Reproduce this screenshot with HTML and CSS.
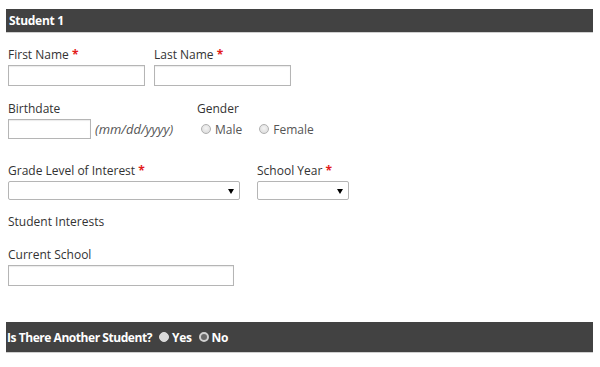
FILE: index.html
```html
<!DOCTYPE html>
<html>
<head>
  <meta name="viewport" content="width=device-width">
  <title>Student Information</title>
  <link rel="stylesheet" href="styles.css">
</head>
<body>
  <div class="main">
    <header class="bar bar_top">Student 1</header>
    <div class="row row_names">
      <div class="field field_first">
        <label>First Name <span class="req">*</span></label>
        <input type="text" class="text_box name_box">
      </div>
      <div class="field">
        <label>Last Name <span class="req">*</span></label>
        <input type="text" class="text_box name_box">
      </div>
    </div>
    <div class="row row_birth">
      <div class="field field_birth">
        <label>Birthdate</label>
        <div class="inline">
          <input type="text" class="text_box birth_box">
          <span class="hint">(mm/dd/yyyy)</span>
        </div>
      </div>
      <div class="field">
        <label>Gender</label>
        <div class="radios">
          <label class="choice"><input type="radio" name="gender"> Male</label>
          <label class="choice"><input type="radio" name="gender"> Female</label>
        </div>
      </div>
    </div>
    <div class="row row_grade">
      <div class="field field_grade">
        <label>Grade Level of Interest <span class="req">*</span></label>
        <div class="select grade_select"><select></select></div>
      </div>
      <div class="field">
        <label>School Year <span class="req">*</span></label>
        <div class="select year_select"><select></select></div>
      </div>
    </div>
    <div class="row row_interests">
      <label>Student Interests</label>
    </div>
    <div class="row row_school">
      <div class="field">
        <label>Current School</label>
        <input type="text" class="text_box school_box">
      </div>
    </div>
    <div class="bar bar_bottom">
      <span class="question">Is There Another Student?</span>
      <label class="choice choice_dark"><input type="radio" name="another" class="radio_yes"> Yes</label>
      <label class="choice choice_dark"><input type="radio" name="another" class="radio_no"> No</label>
    </div>
  </div>
</body>
</html>
```

FILE: styles.css
```css
*, *:before, *:after {
  box-sizing: border-box;
}
body {
  font-family: "Open Sans", sans-serif;
  font-size: 12px;
  color: #333;
  margin: 0;
  padding: 0;
  background: #fff;
}
.main {
  padding: 9px 7px 0 6px;
}

.bar {
  background: #424242;
  color: #fff;
  font-weight: bold;
  border-bottom: 1px solid #cfcfcf;
  display: flex;
  align-items: center;
  letter-spacing: -0.3px;
}
.bar_top {
  height: 24px;
  padding-left: 3px;
}
.bar_bottom {
  height: 31px;
  padding-left: 1px;
  margin-top: 36px;
}
.question {
  letter-spacing: -0.45px;
}

.row {
  display: flex;
  padding-left: 2px;
}
.row_names { margin-top: 14px; }
.row_birth { margin-top: 15px; }
.row_grade { margin-top: 24px; }
.row_interests { margin-top: 14px; line-height: 16px; }
.row_school { margin-top: 17px; }

.field {
  display: flex;
  flex-direction: column;
}
.field > label {
  line-height: 16px;
  margin-bottom: 2px;
}
.field_first { width: 146px; }
.field_birth { width: 189px; }
.field_grade { width: 249px; }

.req {
  color: #e31b1b;
  font-weight: bold;
}

.text_box {
  border: 1px solid #b5b5b5;
  box-shadow: inset 0 1px 1px rgba(0, 0, 0, 0.08);
  background: #fff;
  margin: 0;
  padding: 0 4px;
  font: inherit;
}
.name_box { width: 137px; height: 21px; }
.birth_box { width: 83px; height: 20px; }
.school_box { width: 226px; height: 21px; }

.inline {
  display: flex;
  align-items: center;
}
.hint {
  font-style: italic;
  font-size: 13px;
  color: #555;
  margin-left: 4px;
}

.radios {
  display: flex;
  align-items: center;
  height: 20px;
  padding-left: 4px;
}
.choice {
  display: inline-flex;
  align-items: center;
  color: #555;
  margin-right: 17px;
}
.choice input {
  appearance: none;
  -webkit-appearance: none;
  width: 10px;
  height: 10px;
  margin: 0 4px 0 0;
  border-radius: 50%;
  border: 1px solid #b0b0b0;
  background: radial-gradient(circle at 50% 40%, #f4f4f4, #d8d8d8);
}

.choice_dark {
  color: #fff;
  margin: 0 0 0 7px;
}
.choice_dark .radio_yes {
  border-color: #ddd;
  background: #d9d9d9;
  margin-right: 3px;
}
.choice_dark .radio_no {
  border: 2px solid #d0d0d0;
  background: #6a6a6a;
  margin-right: 3px;
}

.select {
  position: relative;
  height: 19px;
}
.select select {
  appearance: none;
  -webkit-appearance: none;
  width: 100%;
  height: 100%;
  margin: 0;
  border: 1px solid #b5b5b5;
  border-radius: 2px;
  background: #fff;
}
.select:after {
  content: "";
  position: absolute;
  right: 6px;
  top: 8px;
  border-left: 3px solid transparent;
  border-right: 3px solid transparent;
  border-top: 5px solid #000;
  pointer-events: none;
}
.grade_select { width: 232px; }
.year_select { width: 92px; }
```
